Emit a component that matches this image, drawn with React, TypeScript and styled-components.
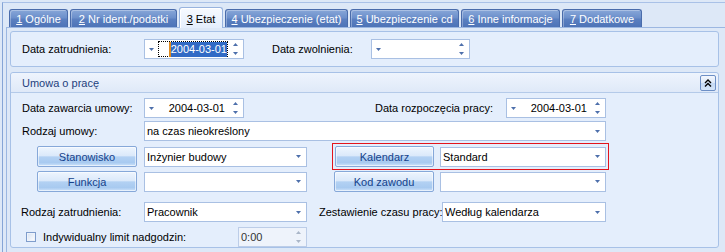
import React from "react";
import styled, { createGlobalStyle } from "styled-components";

const Global = createGlobalStyle`
  html, body { margin: 0; padding: 0; background: #dde8f7; }
  body { font-family: "Liberation Sans", Arial, sans-serif; font-size: 11px; color: #000; }
  * { box-sizing: border-box; }
`;

const Window = styled.div`
  width: 725px;
  height: 252px;
  overflow: hidden;
  padding-top: 2px;
  background: #dde8f7;
`;

const Frame = styled.div`
  margin-left: 2px;
  height: 100%;
  border-left: 1px solid #86a5d6;
  border-top: 1px solid #a9c1e7;
`;

const TabStrip = styled.div`
  display: flex;
  align-items: flex-end;
  gap: 2px;
  height: 24px;
  padding-left: 6px;
`;

const Tab = styled.div<{ $w: number; $active?: boolean }>`
  position: relative;
  z-index: ${(p) => (p.$active ? 1 : 0)};
  flex: none;
  width: ${(p) => p.$w}px;
  height: ${(p) => (p.$active ? 21 : 18)}px;
  margin-bottom: ${(p) => (p.$active ? -1 : 0)}px;
  padding-top: ${(p) => (p.$active ? 1 : 0)}px;
  display: flex;
  align-items: center;
  justify-content: center;
  white-space: pre;
  border: 1px solid ${(p) => (p.$active ? "#98b3de" : "#4a6cab")};
  border-bottom: none;
  border-radius: 3px 3px 0 0;
  color: ${(p) => (p.$active ? "#000" : "#fff")};
  background: ${(p) =>
    p.$active
      ? "linear-gradient(#f7faff, #e4eefc)"
      : "linear-gradient(#87a6d8 0%, #6d90cb 45%, #5a7fc0 55%, #4e74b7 100%)"};
  box-shadow: ${(p) =>
    p.$active ? "inset 1px 1px 0 #ffffff" : "inset 1px 1px 0 rgba(255,255,255,0.3)"};
`;

const TabLabel = styled.span`
  white-space: pre;
`;

const TabPage = styled.div`
  margin-left: 3px;
  height: 100%;
  border-left: 1px solid #9cb7e1;
  border-top: 1px solid #9cb7e1;
  padding: 3px 6px 0 3px;
`;

const Panel = styled.div<{ $mt?: number; $pad?: number }>`
  width: 709px;
  margin-top: ${(p) => p.$mt ?? 0}px;
  padding: ${(p) => p.$pad ?? 0}px 0;
  border: 1px solid #a7c1e7;
  border-radius: 3px;
  background: #e4eefc;
`;

const GroupHeader = styled.div`
  display: flex;
  align-items: center;
  justify-content: space-between;
  height: 20px;
  padding: 0 2px 0 11px;
  border-bottom: 1px solid #b4cae9;
  border-radius: 3px 3px 0 0;
  background: linear-gradient(#eef4fd, #dfe9f8);
  color: #1e3f7d;
`;

const CollapseButton = styled.div`
  width: 16px;
  height: 16px;
  display: flex;
  align-items: center;
  justify-content: center;
  border: 1px solid #6d8fc6;
  border-radius: 2px;
  background: linear-gradient(#f3f7fe 0%, #dce8f8 50%, #c3d8f3 51%, #d4e4f8 100%);
`;

const Row = styled.div<{ $mt: number; $h?: number }>`
  display: flex;
  align-items: center;
  height: ${(p) => p.$h ?? 20}px;
  margin-top: ${(p) => p.$mt}px;
`;

const Label = styled.div<{ $w: number; $pl?: number; $pr?: number; $right?: boolean }>`
  flex: none;
  width: ${(p) => p.$w}px;
  padding-left: ${(p) => p.$pl ?? 0}px;
  padding-right: ${(p) => p.$pr ?? 0}px;
  text-align: ${(p) => (p.$right ? "right" : "left")};
  white-space: nowrap;
`;

const Spacer = styled.div<{ $w: number }>`
  flex: none;
  width: ${(p) => p.$w}px;
`;

const Field = styled.div<{ $w: number; $disabled?: boolean; $ml?: number }>`
  flex: none;
  width: ${(p) => p.$w}px;
  height: 20px;
  margin-left: ${(p) => p.$ml ?? 0}px;
  display: flex;
  align-items: stretch;
  background: ${(p) => (p.$disabled ? "#eef3fb" : "#ffffff")};
  border: 1px solid ${(p) => (p.$disabled ? "#bccde8" : "#a9c0e3")};
  color: ${(p) => (p.$disabled ? "#333" : "#000")};
`;

const FieldText = styled.div`
  flex: 1;
  display: flex;
  align-items: center;
  padding-left: 2px;
  white-space: nowrap;
  overflow: hidden;
`;

const ArrowZone = styled.div<{ $w: number; $pl?: number }>`
  flex: none;
  width: ${(p) => p.$w}px;
  padding-left: ${(p) => p.$pl ?? 0}px;
  display: flex;
  align-items: center;
  justify-content: ${(p) => (p.$pl !== undefined ? "flex-start" : "center")};
`;

const SpinZone = styled.div`
  flex: none;
  width: 15px;
  display: flex;
  flex-direction: column;
  align-items: center;
  justify-content: center;
  gap: 6px;
`;

const DateValue = styled.div<{ $focused?: boolean }>`
  flex: 1;
  display: flex;
  align-items: center;
  justify-content: flex-end;
  padding-right: ${(p) => (p.$focused ? 0 : 3)}px;
  margin: ${(p) => (p.$focused ? "1px 0" : "0")};
  border: ${(p) => (p.$focused ? "1px dotted #000" : "none")};
  white-space: nowrap;
`;

const Selection = styled.span`
  display: flex;
  align-items: center;
  height: 15px;
  background: #316ac5;
  color: #fff;
  border-left: 2px solid #e08a1e;
`;

const ActionButton = styled.div<{ $w: number }>`
  flex: none;
  width: ${(p) => p.$w}px;
  height: 21px;
  display: flex;
  align-items: center;
  justify-content: center;
  color: #15428b;
  border: 1px solid #86a8d9;
  border-radius: 2px;
  background: linear-gradient(#eef5fe 0%, #dbe9fa 46%, #b3d1f3 52%, #a8caf0 82%, #cfe3fa 100%);
  box-shadow: inset 0 0 0 1px rgba(255, 255, 255, 0.55);
`;

const Highlight = styled.div<{ $ml: number }>`
  flex: none;
  display: flex;
  align-items: center;
  gap: 6px;
  margin-left: ${(p) => p.$ml}px;
  outline: 1px solid #e3141c;
  outline-offset: 2px;
`;

const Pair = styled.div<{ $ml: number }>`
  flex: none;
  display: flex;
  align-items: center;
  gap: 6px;
  margin-left: ${(p) => p.$ml}px;
`;

const Checkbox = styled.div`
  flex: none;
  width: 10px;
  height: 10px;
  border: 1px solid #7f9dcc;
  background: linear-gradient(135deg, #d5e1f2, #ffffff);
  box-shadow: inset 0 0 0 1px #eef3fb;
`;

const Down = ({ c = "#4d6fab" }: { c?: string }) => (
  <svg width="5" height="3" viewBox="0 0 5 3">
    <polygon points="0,0 5,0 2.5,3" fill={c} />
  </svg>
);

const Up = ({ c = "#4d6fab" }: { c?: string }) => (
  <svg width="5" height="3" viewBox="0 0 5 3">
    <polygon points="0,3 5,3 2.5,0" fill={c} />
  </svg>
);

const Spin = ({ c }: { c?: string }) => (
  <SpinZone>
    <Up c={c} />
    <Down c={c} />
  </SpinZone>
);

const Combo = ({ w, text, ml }: { w: number; text?: string; ml?: number }) => (
  <Field $w={w} $ml={ml}>
    <FieldText>{text}</FieldText>
    <ArrowZone $w={15}>
      <Down />
    </ArrowZone>
  </Field>
);

const DateField = ({ w, value, focused }: { w: number; value?: string; focused?: boolean }) => (
  <Field $w={w}>
    <ArrowZone $w={13} $pl={4}>
      <Down />
    </ArrowZone>
    <DateValue $focused={focused}>
      {focused ? <Selection>{value}</Selection> : value}
    </DateValue>
    <Spin />
  </Field>
);

const tabs = [
  { k: "1", t: " Ogólne", w: 59 },
  { k: "2", t: " Nr ident./podatki", w: 107 },
  { k: "3", t: " Etat", w: 44, active: true },
  { k: "4", t: " Ubezpieczenie (etat)", w: 123 },
  { k: "5", t: " Ubezpieczenie cd", w: 109 },
  { k: "6", t: " Inne informacje", w: 99 },
  { k: "7", t: " Dodatkowe", w: 80 },
];

export default function App() {
  return (
    <Window>
      <Global />
      <Frame>
        <TabStrip>
          {tabs.map((tab) => (
            <Tab key={tab.k} $w={tab.w} $active={tab.active}>
              <TabLabel>
                <u>{tab.k}</u>
                {tab.t}
              </TabLabel>
            </Tab>
          ))}
        </TabStrip>
        <TabPage>
          <Panel $pad={7}>
            <Row $mt={0}>
              <Label $w={133} $pl={11}>Data zatrudnienia:</Label>
              <DateField w={100} value="2004-03-01" focused />
              <Label $w={127} $pl={28}>Data zwolnienia:</Label>
              <DateField w={99} />
            </Row>
          </Panel>
          <Panel $mt={5}>
            <GroupHeader>
              <span>Umowa o pracę</span>
              <CollapseButton>
                <svg width="8" height="8" viewBox="0 0 8 8">
                  <polyline points="1,4 4,1 7,4" fill="none" stroke="#000" strokeWidth="1.4" />
                  <polyline points="1,7.5 4,4.5 7,7.5" fill="none" stroke="#000" strokeWidth="1.4" />
                </svg>
              </CollapseButton>
            </GroupHeader>
            <Row $mt={5}>
              <Label $w={133} $pl={11}>Data zawarcia umowy:</Label>
              <DateField w={100} value="2004-03-01" />
              <Label $w={262} $pr={13} $right>Data rozpoczęcia pracy:</Label>
              <DateField w={100} value="2004-03-01" />
            </Row>
            <Row $mt={3}>
              <Label $w={133} $pl={11}>Rodzaj umowy:</Label>
              <Combo w={462} text="na czas nieokreślony" />
            </Row>
            <Row $mt={5} $h={21}>
              <Spacer $w={26} />
              <ActionButton $w={100}>Stanowisko</ActionButton>
              <Combo w={163} ml={7} text="Inżynier budowy" />
              <Highlight $ml={28}>
                <ActionButton $w={99}>Kalendarz</ActionButton>
                <Combo w={166} text="Standard" />
              </Highlight>
            </Row>
            <Row $mt={4} $h={21}>
              <Spacer $w={26} />
              <ActionButton $w={100}>Funkcja</ActionButton>
              <Combo w={163} ml={7} />
              <Pair $ml={27}>
                <ActionButton $w={100}>Kod zawodu</ActionButton>
                <Combo w={166} />
              </Pair>
            </Row>
            <Row $mt={10}>
              <Label $w={133} $pl={10}>Rodzaj zatrudnienia:</Label>
              <Combo w={163} text="Pracownik" />
              <Label $w={135} $pl={12}>Zestawienie czasu pracy:</Label>
              <Combo w={164} text="Według kalendarza" />
            </Row>
            <Row $mt={5}>
              <Spacer $w={15} />
              <Checkbox />
              <Label $w={202} $pl={7}>Indywidualny limit nadgodzin:</Label>
              <Field $w={69} $disabled>
                <FieldText>0:00</FieldText>
                <Spin c="#aab6c8" />
              </Field>
            </Row>
          </Panel>
        </TabPage>
      </Frame>
    </Window>
  );
}
